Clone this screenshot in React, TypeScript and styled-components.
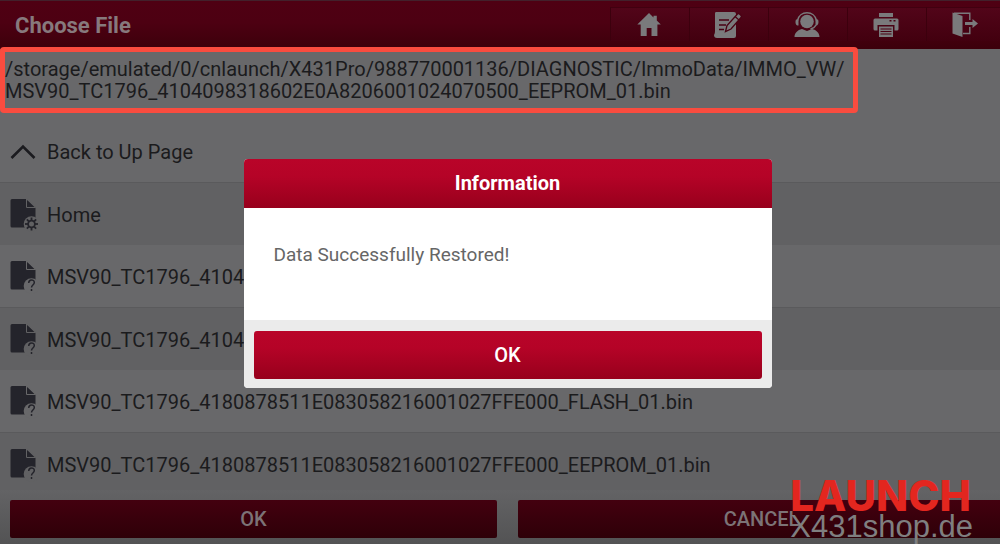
import React from "react";
import styled, { createGlobalStyle } from "styled-components";

const GlobalStyle = createGlobalStyle`
  *, *::before, *::after { box-sizing: border-box; }
  body {
    margin: 0;
    background: #68686a;
    font-family: Roboto, "Liberation Sans", sans-serif;
    font-size: 20px;
    color: #1b1b1d;
  }
  button { font: inherit; border: 0; margin: 0; padding: 0; cursor: pointer; }
`;

const Screen = styled.div`
  position: relative;
  min-height: 100vh;
  overflow: hidden;
  display: flex;
  flex-direction: column;
`;

const Header = styled.header`
  display: flex;
  justify-content: space-between;
  height: 49px;
  margin-right: -5px;
  padding-left: 15px;
  background: linear-gradient(#4f0013, #4d0012 45%, #3c000b);
  border-top: 1px solid #42202b;
`;

const Title = styled.h1`
  margin: 0;
  font-size: 22px;
  line-height: 50px;
  font-weight: 700;
  color: #87797d;
`;

const Toolbar = styled.nav`
  display: flex;
  padding: 6px 0 8px;
`;

const ToolButton = styled.button`
  display: flex;
  align-items: center;
  justify-content: center;
  width: 79px;
  padding-right: 2px;
  color: #7a7a7c;
  background: linear-gradient(#520519, #42000f);
  border-left: 1px solid #3c000d;
  border-top: 1px solid #410010;
`;

const PathBox = styled.div`
  position: relative;
  width: 858px;
  max-width: 100%;
  margin: -2px 0 7px;
  padding: 6px 0;
  border: 5px solid #f94c3f;
  border-radius: 4px;
  line-height: 22px;
  overflow-wrap: anywhere;
`;

const FileList = styled.ul`
  flex: 1 1 370px;
  height: 370px;
  margin: 0;
  padding: 0;
  list-style: none;
  overflow: hidden;
`;

const Row = styled.li<{ $shaded: boolean }>`
  background: ${(p) => (p.$shaded ? "#616163" : "#68686a")};
  border-top: ${(p) => (p.$shaded ? "1px solid #5a5a5c" : "0")};
`;

const RowButton = styled.button`
  display: flex;
  align-items: center;
  gap: 7px;
  width: 100%;
  height: 62px;
  padding: 2px 0 0 10px;
  background: none;
  color: inherit;
  text-align: left;
  white-space: nowrap;
`;

const RowIcon = styled.svg`
  flex: none;
  width: 30px;
  height: 34px;
`;

const Footer = styled.footer`
  display: grid;
  grid-template-columns: 1fr 1fr;
  gap: 21px;
  margin-right: -5px;
  padding: 10px 0 6px 10px;
  background: linear-gradient(#636365, #535354);
`;

const ActionButton = styled.button`
  height: 38px;
  border-radius: 2px;
  background: linear-gradient(#43000f, #2e0008);
  color: #7c7376;
  font-weight: 500;
`;

const Backdrop = styled.div`
  position: absolute;
  inset: 0;
  display: flex;
  align-items: center;
  justify-content: center;
  padding: 3px 0 0 15px;
`;

const Dialog = styled.section`
  width: 528px;
  max-width: 100%;
  border-radius: 4px;
  overflow: hidden;
  background: #fff;
`;

const DialogTitle = styled.h2`
  margin: 0;
  font-size: 20px;
  line-height: 49px;
  font-weight: 700;
  text-align: center;
  color: #fff;
  background: linear-gradient(#b90429, #b50327 35%, #97001c);
`;

const DialogBody = styled.p`
  margin: 0;
  padding: 35px 30px 53px;
  font-size: 19px;
  line-height: 24px;
  color: #666;
`;

const DialogFooter = styled.div`
  display: flex;
  padding: 11px 10px 9px;
  background: #ebebeb;
`;

const ConfirmButton = styled.button`
  flex: 1;
  height: 48px;
  border-radius: 3px;
  color: #fff;
  font-weight: 500;
  background: linear-gradient(#b90429, #b50327 35%, #97001c);
`;

const Watermark = styled.div`
  position: absolute;
  right: 27px;
  bottom: 0;
  text-align: left;
  pointer-events: none;
`;

const Brand = styled.div`
  font: 800 42px/28px Inter, "Liberation Sans", sans-serif;
  color: #e3261f;
`;

const Site = styled.div`
  font: 31px/34px "Liberation Sans", sans-serif;
  color: #7f7f80;
`;

const HomeIcon = () => (
  <svg width="28" height="28" viewBox="0 0 28 28" fill="currentColor" aria-hidden="true">
    <path d="M14 2 2.300 13.600h3.400V25h6v-8h4.800v8h5.900V13.600h3.400l-4-4V4.700h-3.300v1.700z" />
  </svg>
);

const NoteIcon = () => (
  <svg width="30" height="28" viewBox="0 0 30 28" aria-hidden="true">
    <path fill="currentColor" d="M3 1h18a2 2 0 0 1 2 2v22a2 2 0 0 1-2 2H4a3 3 0 0 1-3-3c1-2 1-3 1-5V3c0-1 0-2 1-2z" />
    <path stroke="#4a0013" strokeWidth="1.500" fill="none" d="M6 9h10M6 14h7M6 18.500h5" />
    <path fill="currentColor" stroke="#4a0013" strokeWidth="1.300" d="m12.500 20.500 1.500-6L24.500 3a1.500 1.500 0 0 1 2 0l1.500 1.500a1.500 1.500 0 0 1 0 2L18 18z" />
    <path stroke="#4a0013" strokeWidth="1.200" d="m22 5.500 4 3.500" />
  </svg>
);

const SupportIcon = () => (
  <svg width="28" height="28" viewBox="0 0 28 28" aria-hidden="true">
    <circle cx="14" cy="10.500" r="6.800" fill="currentColor" />
    <path fill="none" stroke="currentColor" strokeWidth="1.500" d="M4.500 9.500C5.500 4.500 9.500 1.800 14 1.800s8.500 2.700 9.500 7.700M23 14c-1 2-3 3.500-5.500 4" />
    <path fill="currentColor" d="M3 8.500h2.500v6H4.500C2.500 14 2 11 3 8.500zM25 8.500h-2.500v6h1c2-.5 2.500-3.500 1.500-6zM1.500 26c0-4 3-7 7.500-8l5 2 5-2c4.500 1 7.500 4 7.500 8z" />
  </svg>
);

const PrinterIcon = () => (
  <svg width="28" height="28" viewBox="0 0 28 28" aria-hidden="true">
    <path fill="currentColor" d="M7 2h14v4H7zM3 7.500h22a1.500 1.500 0 0 1 1.500 1.500v9a1.500 1.500 0 0 1-1.500 1.500h-2.500V14h-17v5.500H3A1.500 1.500 0 0 1 1.500 18V9A1.500 1.500 0 0 1 3 7.500z" />
    <path fill="currentColor" d="M7 15.500h14V26H7z" />
    <path stroke="#4a0013" strokeWidth="1" d="M8.500 18h11M8.500 20.500h11M8.500 23h11" />
    <path stroke="#4a0013" strokeWidth="1.400" d="M17.500 9.800h2M21.500 9.800h2" />
  </svg>
);

const ExitIcon = () => (
  <svg width="28" height="28" viewBox="0 0 28 28" aria-hidden="true">
    <path fill="currentColor" d="m1.500 1.500 10 3.500v21l-10-3.500z" />
    <path fill="none" stroke="currentColor" strokeWidth="1.400" d="M3 2.200h15.800V9M18.800 16v6.500H12" />
    <path fill="currentColor" d="M14 11h7.500V8l5.500 4.500-5.500 4.500v-3H14z" />
  </svg>
);

type IconKind = "up" | "settings" | "unknown";

const teeth = [0, 45, 90, 135, 180, 225, 270, 315];

const EntryIcon = ({ kind, bg }: { kind: IconKind; bg: string }) => {
  if (kind === "up") {
    return (
      <RowIcon viewBox="0 0 30 34" aria-hidden="true">
        <path d="M1.500 23 13 11.500 24.500 23" fill="none" stroke="#1b1b1f" strokeWidth="2.600" />
      </RowIcon>
    );
  }
  return (
    <RowIcon viewBox="0 0 30 34" aria-hidden="true">
      <path d="M2 1h14l9.500 9v19.500H2A1.500 1.500 0 0 1 .500 28V2.500A1.500 1.500 0 0 1 2 1z" fill="#24242b" />
      <path d="M16 0h11v10z" fill={bg} />
      <path d="M16.500 1v8.500h9" fill="none" stroke={bg} strokeWidth="1" />
      <path d="m17.500 3 5.500 5.500h-5.500z" fill="#24242b" />
      <circle cx="21.500" cy="26" r="7.800" fill={bg} />
      {kind === "settings" ? (
        <g stroke="#24242b" fill="none">
          <circle cx="21.500" cy="26" r="3.400" strokeWidth="1.800" />
          {teeth.map((a) => (
            <path key={a} d="M21.500 19.500v3" strokeWidth="1.800" transform={`rotate(${a} 21.500 26)`} />
          ))}
        </g>
      ) : (
        <g stroke="#24242b" fill="none" strokeWidth="1.500">
          <path d="M18.700 23c0-4 5.600-4 5.600-.5 0 2.500-2.800 2.500-2.800 5" />
          <path d="M21.500 29v2" />
        </g>
      )}
    </RowIcon>
  );
};

const tools = [
  { label: "Home", Icon: HomeIcon },
  { label: "Notes", Icon: NoteIcon },
  { label: "Support", Icon: SupportIcon },
  { label: "Print", Icon: PrinterIcon },
  { label: "Exit", Icon: ExitIcon },
];

const entries: { name: string; kind: IconKind }[] = [
  { name: "Back to Up Page", kind: "up" },
  { name: "Home", kind: "settings" },
  { name: "MSV90_TC1796_4104", kind: "unknown" },
  { name: "MSV90_TC1796_4104", kind: "unknown" },
  { name: "MSV90_TC1796_4180878511E083058216001027FFE000_FLASH_01.bin", kind: "unknown" },
  { name: "MSV90_TC1796_4180878511E083058216001027FFE000_EEPROM_01.bin", kind: "unknown" },
];

export default function App() {
  return (
    <>
      <GlobalStyle />
      <Screen>
        <Header>
          <Title>Choose File</Title>
          <Toolbar>
            {tools.map(({ label, Icon }) => (
              <ToolButton key={label} aria-label={label}>
                <Icon />
              </ToolButton>
            ))}
          </Toolbar>
        </Header>
        <PathBox>
          /storage/emulated/0/cnlaunch/X431Pro/988770001136/DIAGNOSTIC/ImmoData/IMMO_VW/
          <br />
          MSV90_TC1796_4104098318602E0A8206001024070500_EEPROM_01.bin
        </PathBox>
        <FileList>
          {entries.map(({ name, kind }, i) => (
            <Row key={i} $shaded={i % 2 === 1}>
              <RowButton>
                <EntryIcon kind={kind} bg={i % 2 ? "#616163" : "#68686a"} />
                {name}
              </RowButton>
            </Row>
          ))}
        </FileList>
        <Footer>
          <ActionButton>OK</ActionButton>
          <ActionButton>CANCEL</ActionButton>
        </Footer>
        <Backdrop>
          <Dialog role="dialog" aria-modal="true" aria-labelledby="dialog-title">
            <DialogTitle id="dialog-title">Information</DialogTitle>
            <DialogBody>Data Successfully Restored!</DialogBody>
            <DialogFooter>
              <ConfirmButton>OK</ConfirmButton>
            </DialogFooter>
          </Dialog>
        </Backdrop>
        <Watermark>
          <Brand>LAUNCH</Brand>
          <Site>X431shop.de</Site>
        </Watermark>
      </Screen>
    </>
  );
}
